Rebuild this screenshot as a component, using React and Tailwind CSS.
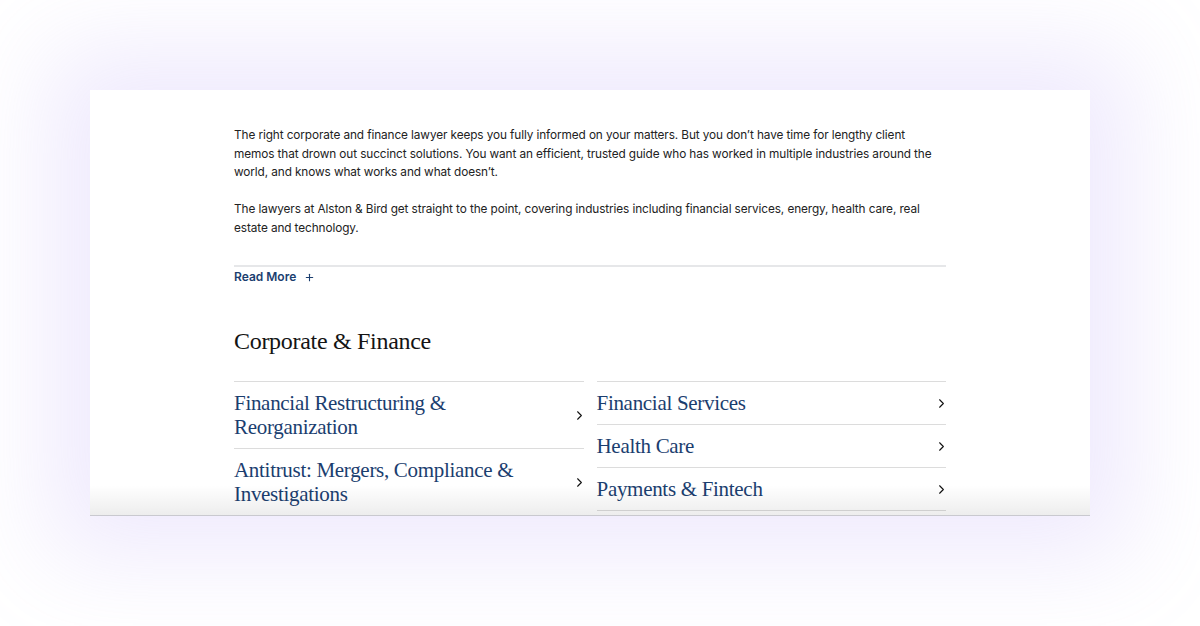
import { ChevronRight, Plus } from "lucide-react";

const leftItems = [
  "Financial Restructuring & Reorganization",
  "Antitrust: Mergers, Compliance & Investigations",
];

const rightItems = ["Financial Services", "Health Care", "Payments & Fintech"];

const serif = { fontFamily: '"Liberation Serif", "Times New Roman", serif' };

function PracticeRow({ label, narrow }) {
  return (
    <a
      href="#"
      className="flex items-center justify-between border-b border-[#dcdcdc] py-[9px]"
    >
      <span
        className={`text-[21px] leading-[24px] text-[#1b3e6f] tracking-[-0.3px] ${narrow ? "max-w-[290px]" : ""}`}
        style={serif}
      >
        {label}
      </span>
      <ChevronRight size={15} strokeWidth={1.7} className="text-[#111] shrink-0 -mr-[3px]" />
    </a>
  );
}

export default function App() {
  return (
    <div className="w-full h-[626px] bg-white flex items-start pt-[90px] pl-[90px]">
      <div className="relative w-[1000px] h-[426px] bg-white overflow-hidden border-b border-[#c9c9cf] shadow-[0_0_90px_40px_rgba(180,160,245,0.22)]">
        <div className="px-[144px] pt-[36px]" style={{ fontFamily: "Inter, sans-serif" }}>
          <div className="text-[11.8px] leading-[18.5px] tracking-[-0.1px] text-[#222]">
            <p>
              The right corporate and finance lawyer keeps you fully informed on your matters. But you don’t have time for lengthy client memos that drown out succinct solutions. You want an efficient, trusted guide who has worked in multiple industries around the world, and knows what works and what doesn’t.
            </p>
            <p className="mt-[18.5px]">
              The lawyers at Alston &amp; Bird get straight to the point, covering industries including financial services, energy, health care, real estate and technology.
            </p>
          </div>

          <div className="mt-[28px] border-t-2 border-[#e6e7e9] pt-[1px]">
            <button className="flex items-center gap-[8px] text-[12px] font-semibold text-[#1b3e6f]">
              Read More
              <Plus size={11} strokeWidth={2.4} />
            </button>
          </div>

          <h2 className="mt-[40px] text-[24px] leading-[30px] text-[#141414] tracking-[-0.3px]" style={serif}>
            Corporate &amp; Finance
          </h2>

          <div className="mt-[25px] grid grid-cols-2 gap-x-[13px]">
            <div className="border-t border-[#dcdcdc]">
              {leftItems.map((item) => (
                <PracticeRow key={item} label={item} narrow />
              ))}
            </div>
            <div className="border-t border-[#dcdcdc]">
              {rightItems.map((item) => (
                <PracticeRow key={item} label={item} />
              ))}
            </div>
          </div>
        </div>

        <div className="absolute inset-x-0 bottom-0 h-[30px] bg-gradient-to-b from-transparent to-[rgba(0,0,0,0.07)] pointer-events-none" />
      </div>
    </div>
  );
}
